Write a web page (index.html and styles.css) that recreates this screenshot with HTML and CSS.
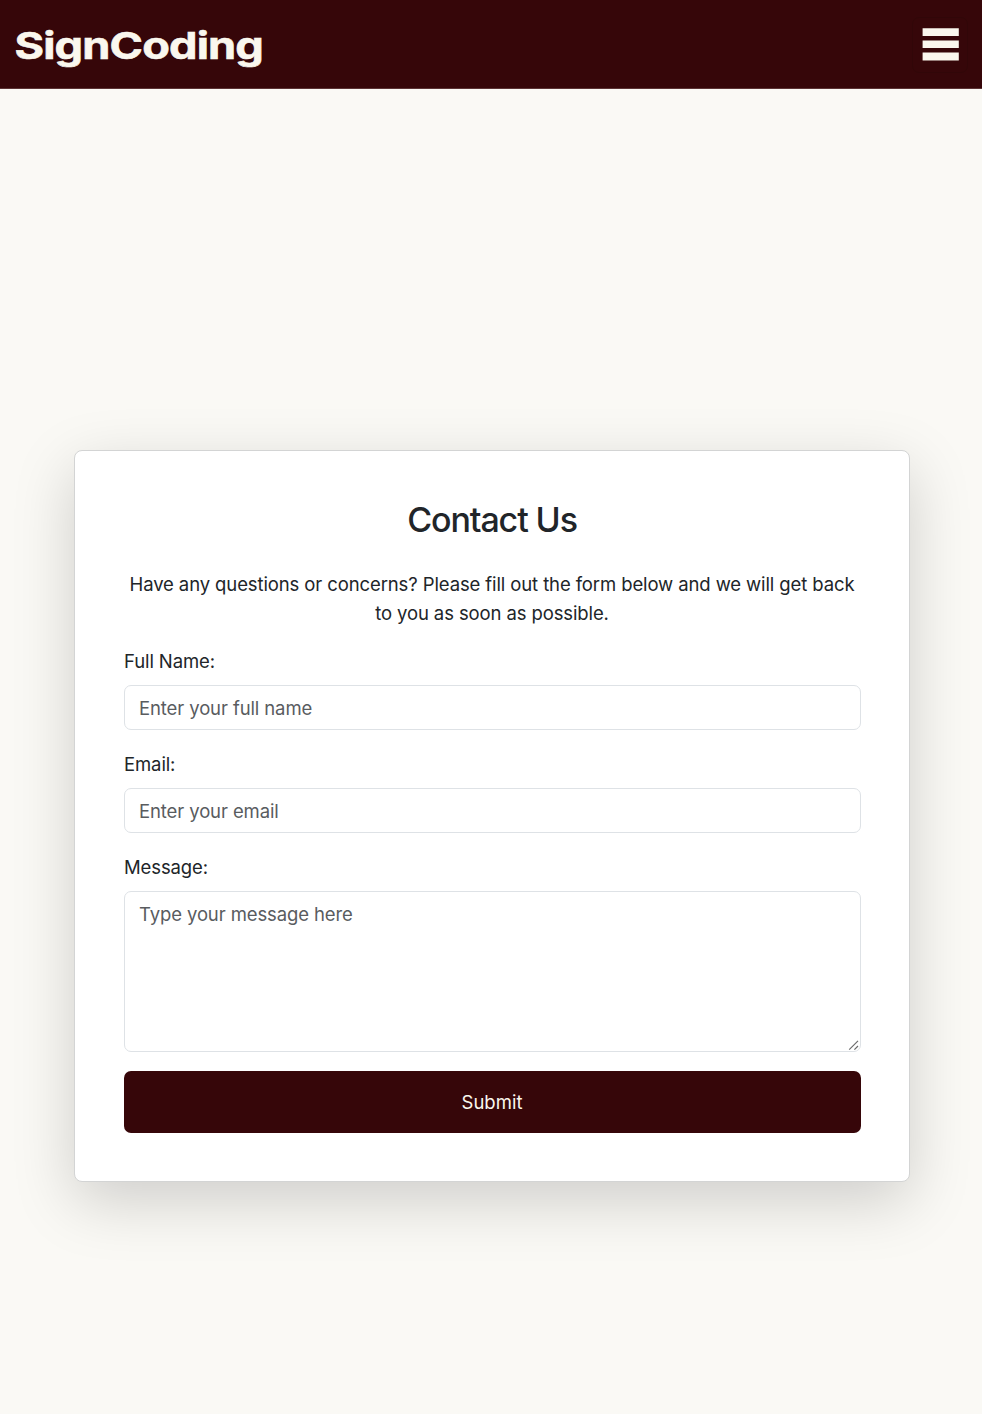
FILE: index.html
```html
<!DOCTYPE html>
<html lang="en">
<head>
<meta charset="utf-8">
<title>SignCoding - Contact Us</title>
<link rel="stylesheet" href="styles.css">
</head>
<body>
<header class="navbar">
  <a class="brand" aria-label="SignCoding">
    <svg class="brand-mark" width="256" height="50" viewBox="0 0 256 50"><text x="-.5" y="38.7" textLength="248.5" lengthAdjust="spacingAndGlyphs">SignCoding</text></svg>
  </a>
  <button class="toggler" type="button" aria-label="Menu">
    <svg width="37" height="34" viewBox="0 0 37 34" fill="currentColor"><path d="M.6.3h36.2v7.7H.6zM.6 12.5h36.2v7.5H.6zM.6 24.4h36.2v8.2H.6z"/></svg>
  </button>
</header>
<main class="page">
  <section class="card">
    <h2 class="title">Contact Us</h2>
    <p class="intro">Have any questions or concerns? Please fill out the form below and we will get back<br>to you as soon as possible.</p>
    <form class="form">
      <div class="field">
        <label class="label" for="name">Full Name:</label>
        <input class="control name" id="name" type="text" placeholder="Enter your full name">
      </div>
      <div class="field">
        <label class="label" for="email">Email:</label>
        <input class="control email" id="email" type="email" placeholder="Enter your email">
      </div>
      <div class="field">
        <label class="label" for="message">Message:</label>
        <textarea class="control area" id="message" placeholder="Type your message here"></textarea>
        <svg class="grip" width="12" height="12" viewBox="0 0 12 12" fill="none" stroke="#6b6b6b" stroke-width="1.2"><path d="M1.2 10.6 10 1.8M6.4 10.6 10 7"/></svg>
      </div>
      <button class="submit" type="button">Submit</button>
    </form>
  </section>
</main>
</body>
</html>
```
FILE: styles.css
```css
* { box-sizing: border-box; }
body {
  margin: 0;
  min-height: 1414px;
  background: #faf9f5;
  color: #212529;
  font-family: Inter, "Liberation Sans", sans-serif;
  font-size: 18.5px;
  line-height: 29px;
  letter-spacing: -0.11px;
}
.navbar {
  display: flex;
  align-items: center;
  justify-content: space-between;
  height: 89px;
  padding: 1px 14px 0 15px;
  background: #360609;
  border-bottom: 1px solid #5c3335;
}
.brand { display: flex; }
.brand-mark { overflow: visible; }
.brand-mark text {
  fill: #faf7ee;
  font-family: Inter, sans-serif;
  font-size: 37.3px;
  font-weight: 700;
  letter-spacing: -.7px;
  stroke: #faf7ee;
  stroke-width: .6px;
}
.toggler {
  display: flex;
  align-items: center;
  justify-content: center;
  width: 56px;
  height: 56px;
  padding: 1px 0 0;
  border: 1px solid #310608;
  border-radius: 7px;
  background: none;
  color: #faf7ee;
}
.page { padding: 361px 72px 0 74px; }
.card {
  width: 836px;
  height: 732px;
  padding: 48px 49px;
  background: #fff;
  border: 1px solid #d3d4d4;
  border-radius: 8px;
  box-shadow: 0 19px 62px rgba(0, 0, 0, .175);
}
.title {
  margin: 0 0 27px;
  font-size: 34px;
  line-height: 42px;
  height: 44px;
  font-weight: 550;
  letter-spacing: -1.1px;
  text-align: center;
}
.intro { margin: 0 0 19px; text-align: center; white-space: nowrap; }
.form { display: flex; flex-direction: column; }
.field { position: relative; display: flex; flex-direction: column; margin-bottom: 19px; }
.label { margin-bottom: 9px; height: 29px; }
.control {
  display: block;
  width: 737px;
  height: 45px;
  margin-bottom: 1px;
  padding: 7px 14px;
  border: 1px solid #dee2e6;
  border-radius: 7px;
  background: #fff;
  color: #212529;
  font: inherit;
  letter-spacing: inherit;
}
.control::placeholder { color: #595c5f; opacity: 1; }
.area { height: 161px; margin-bottom: 0; padding-top: 8px; resize: none; }
.grip { position: absolute; right: 0; bottom: 1px; }
.submit {
  height: 62px;
  width: 737px;
  padding: 0 1px 0 0;
  border: 0;
  border-radius: 7px;
  background: #360609;
  color: #faf7ee;
  font: inherit;
  letter-spacing: 0;
}
```
